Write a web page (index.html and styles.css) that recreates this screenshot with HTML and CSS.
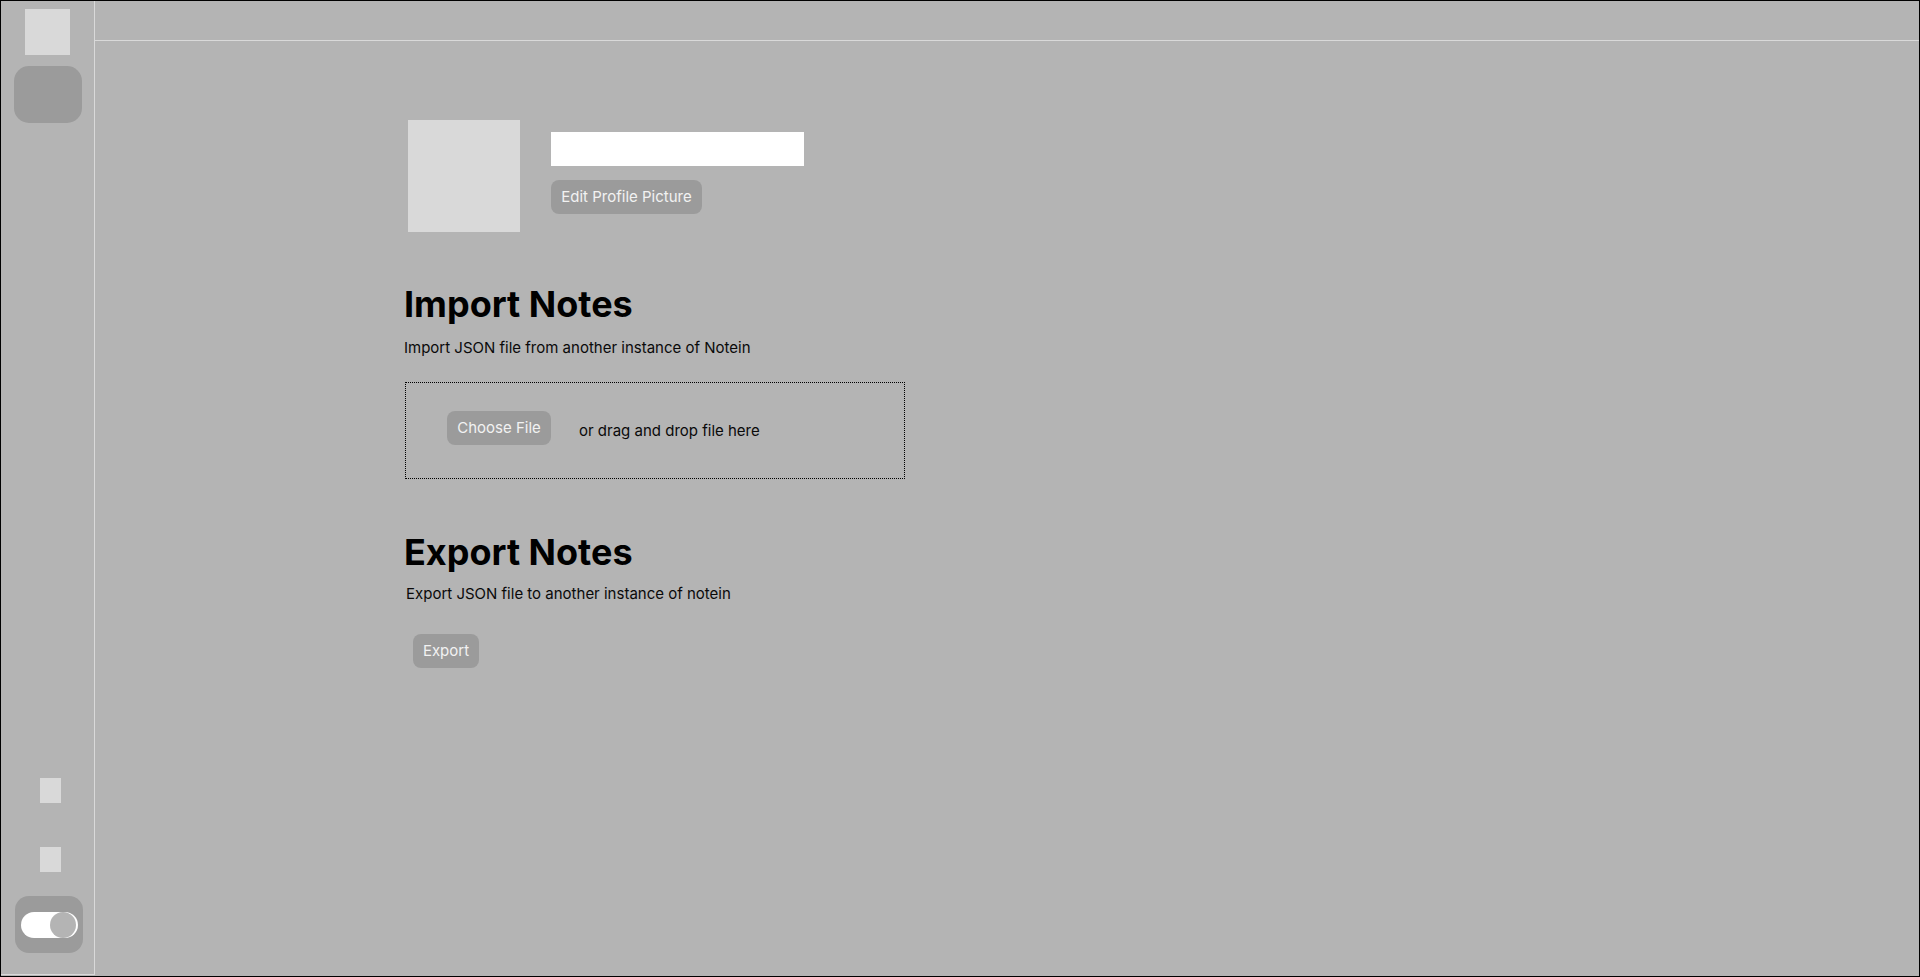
FILE: index.html
```html
<!DOCTYPE html>
<html lang="en">
<head>
<meta charset="utf-8">
<title>Settings</title>
<link rel="stylesheet" href="styles.css">
</head>
<body>
<div class="app">
  <aside class="sidebar">
    <div class="logo"></div>
    <div class="nav-btn"></div>
    <div class="spacer"></div>
    <div class="side-icons">
      <div class="side-icon"></div>
      <div class="side-icon"></div>
    </div>
    <div class="theme-box">
      <div class="toggle"><div class="knob"></div></div>
    </div>
  </aside>
  <main class="main">
    <header class="topbar"></header>
    <section class="content">
      <div class="profile">
        <div class="avatar"></div>
        <div class="profile-side">
          <div class="name-input"></div>
          <button class="btn btn-edit">Edit Profile Picture</button>
        </div>
      </div>

      <h1 class="heading heading-import">Import Notes</h1>
      <p class="desc desc-import">Import JSON file from another instance of Notein</p>
      <div class="dropzone">
        <button class="btn btn-choose">Choose File</button>
        <span class="drop-text">or drag and drop file here</span>
      </div>

      <h1 class="heading heading-export">Export Notes</h1>
      <p class="desc desc-export">Export JSON file to another instance of notein</p>
      <button class="btn btn-export">Export</button>
    </section>
  </main>
</div>
</body>
</html>
```
FILE: styles.css
```css
* { box-sizing: border-box; }
html, body {
  margin: 0;
  padding: 0;
  background: #b4b4b4;
  font-family: Inter, "Noto Sans", sans-serif;
}
.app {
  width: 1920px;
  height: 977px;
  border: 1px solid #000;
  display: flex;
  background: #b4b4b4;
  overflow: hidden;
}
.sidebar {
  width: 94px;
  height: 974px;
  flex: none;
  border-right: 1px solid #d9d9d9;
  border-bottom: 1px solid #d9d9d9;
  display: flex;
  flex-direction: column;
  align-items: center;
  padding: 8px 0 21px 0;
}
.logo {
  width: 45px;
  height: 46px;
  background: #d9d9d9;
}
.nav-btn {
  width: 68px;
  height: 57px;
  margin-top: 11px;
  background: #9b9b9b;
  border-radius: 15px;
}
.spacer { flex: 1; }
.side-icons {
  display: flex;
  flex-direction: column;
  gap: 44px;
  margin-left: 6px;
}
.side-icon {
  width: 21px;
  height: 25px;
  background: #d9d9d9;
}
.theme-box {
  width: 68px;
  height: 57px;
  margin-top: 24px;
  margin-left: 3px;
  background: #9b9b9b;
  border-radius: 14px;
  padding: 16px 5px 15px 6px;
}
.toggle {
  width: 57px;
  height: 26px;
  border-radius: 13px;
  background: #fff;
  display: flex;
  justify-content: flex-end;
  padding-right: 2px;
}
.knob {
  width: 26px;
  height: 26px;
  border-radius: 50%;
  background: #b4b4b4;
}
.main {
  flex: 1;
  display: flex;
  flex-direction: column;
}
.topbar {
  height: 40px;
  flex: none;
  border-bottom: 1px solid #d9d9d9;
}
.content {
  padding: 79px 0 0 309px;
  display: flex;
  flex-direction: column;
  align-items: flex-start;
}
.profile {
  display: flex;
  gap: 31px;
  margin-left: 4px;
}
.avatar {
  width: 112px;
  height: 112px;
  background: #d9d9d9;
}
.profile-side {
  display: flex;
  flex-direction: column;
  align-items: flex-start;
  padding-top: 12px;
  gap: 14px;
}
.name-input {
  width: 253px;
  height: 34px;
  background: #fff;
}
.btn {
  font-family: Inter, "Noto Sans", sans-serif;
  font-size: 15px;
  line-height: 20px;
  height: 34px;
  padding: 0;
  white-space: nowrap;
  text-align: center;
  border: none;
  border-radius: 8px;
  background: #9b9b9b;
  color: #f2f2f2;
  cursor: pointer;
}
.btn-edit { width: 151px; }
.btn-choose { width: 104px; }
.btn-export { width: 66px; margin-left: 9px; margin-top: 31px; }
.heading {
  margin: 0;
  font-size: 36px;
  line-height: 44px;
  font-weight: 700;
  color: #000;
}
.heading-import { margin-top: 50px; }
.heading-export { margin-top: 51px; }
.desc {
  margin: 0;
  font-size: 15px;
  line-height: 18px;
  color: #0a0a0a;
}
.desc-import { margin-top: 13px; }
.desc-export { margin-top: 11px; margin-left: 2px; }
.dropzone {
  margin-top: 25px;
  margin-left: 1px;
  width: 500px;
  height: 97px;
  border: 1px dotted #000;
  display: flex;
  align-items: flex-start;
  padding: 28px 0 0 41px;
}
.drop-text {
  margin-left: 28px;
  margin-top: 11px;
  font-size: 15px;
  line-height: 18px;
  color: #0a0a0a;
}
```
